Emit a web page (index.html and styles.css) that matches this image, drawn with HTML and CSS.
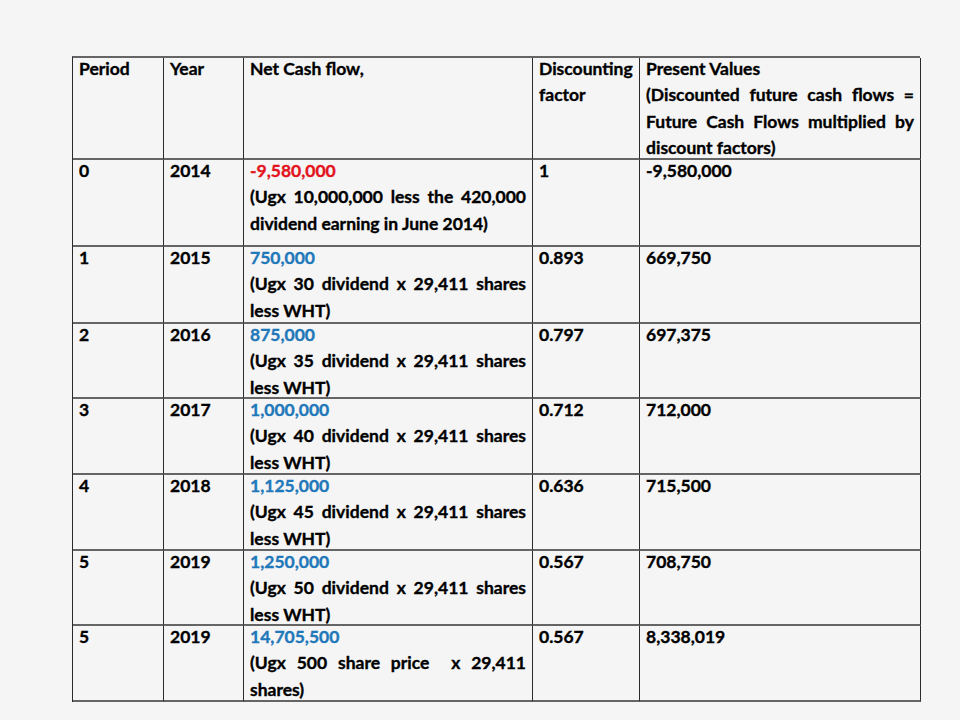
FILE: index.html
```html
<!DOCTYPE html>
<html lang="en">
<head>
<meta charset="utf-8">
<title>Discounted cash flows</title>
<link rel="stylesheet" href="styles.css">
</head>
<body>
<div class="sheet">
  <div class="grid">
    <div class="c"><p class="t">Period</p></div>
    <div class="c"><p class="t">Year</p></div>
    <div class="c"><p class="t">Net Cash flow,</p></div>
    <div class="c"><p class="t">Discounting factor</p></div>
    <div class="c"><p class="t just">Present Values<br>(Discounted future cash flows = Future Cash Flows multiplied by discount factors)</p></div>

    <div class="c"><p class="t">0</p></div>
    <div class="c"><p class="t">2014</p></div>
    <div class="c"><p class="t just"><span class="neg">-9,580,000</span><br>(Ugx 10,000,000 less the 420,000 dividend earning in June 2014)</p></div>
    <div class="c"><p class="t">1</p></div>
    <div class="c"><p class="t">-9,580,000</p></div>

    <div class="c"><p class="t">1</p></div>
    <div class="c"><p class="t">2015</p></div>
    <div class="c"><p class="t just"><span class="pos">750,000</span><br>(Ugx 30 dividend x 29,411 shares less WHT)</p></div>
    <div class="c"><p class="t">0.893</p></div>
    <div class="c"><p class="t">669,750</p></div>

    <div class="c"><p class="t">2</p></div>
    <div class="c"><p class="t">2016</p></div>
    <div class="c"><p class="t just"><span class="pos">875,000</span><br>(Ugx 35 dividend x 29,411 shares less WHT)</p></div>
    <div class="c"><p class="t">0.797</p></div>
    <div class="c"><p class="t">697,375</p></div>

    <div class="c"><p class="t">3</p></div>
    <div class="c"><p class="t">2017</p></div>
    <div class="c"><p class="t just"><span class="pos">1,000,000</span><br>(Ugx 40 dividend x 29,411 shares less WHT)</p></div>
    <div class="c"><p class="t">0.712</p></div>
    <div class="c"><p class="t">712,000</p></div>

    <div class="c"><p class="t">4</p></div>
    <div class="c"><p class="t">2018</p></div>
    <div class="c"><p class="t just"><span class="pos">1,125,000</span><br>(Ugx 45 dividend x 29,411 shares less WHT)</p></div>
    <div class="c"><p class="t">0.636</p></div>
    <div class="c"><p class="t">715,500</p></div>

    <div class="c"><p class="t">5</p></div>
    <div class="c"><p class="t">2019</p></div>
    <div class="c"><p class="t just"><span class="pos">1,250,000</span><br>(Ugx 50 dividend x 29,411 shares less WHT)</p></div>
    <div class="c"><p class="t">0.567</p></div>
    <div class="c"><p class="t">708,750</p></div>

    <div class="c"><p class="t">5</p></div>
    <div class="c"><p class="t">2019</p></div>
    <div class="c"><p class="t just"><span class="pos">14,705,500</span><br>(Ugx 500 share price &nbsp;x 29,411 shares)</p></div>
    <div class="c"><p class="t">0.567</p></div>
    <div class="c"><p class="t">8,338,019</p></div>
  </div>
</div>
</body>
</html>
```
FILE: styles.css
```css
html, body {
  margin: 0;
  padding: 0;
  background: #f5f5f5;
}
.sheet {
  width: 960px;
  height: 720px;
  padding: 56px 0 0 72px;
  box-sizing: border-box;
}
.grid {
  display: grid;
  grid-template-columns: 91px 80px 289px 107px 281px;
  grid-template-rows: 102px 87px 77px 75px 76px 76px 75px 76px;
  width: 848px;
  border-top: 2px solid #656565;
  border-left: 1px solid #2a2a2a;
  box-sizing: border-box;
  font-family: Lato, "Open Sans", sans-serif;
  font-weight: 700;
  font-size: 17.5px;
  line-height: 26.4px;
  color: #000;
  -webkit-text-stroke: 0.35px currentColor;
}
.c {
  border-right: 1px solid #2a2a2a;
  border-bottom: 2px solid #656565;
  padding: 0 6px;
  overflow: visible;
  min-width: 0;
}
.t {
  margin: -2px 0 0 0;
}
.just {
  text-align: justify;
}
.neg {
  color: #e3131d;
}
.pos {
  color: #1f78b9;
}
```
